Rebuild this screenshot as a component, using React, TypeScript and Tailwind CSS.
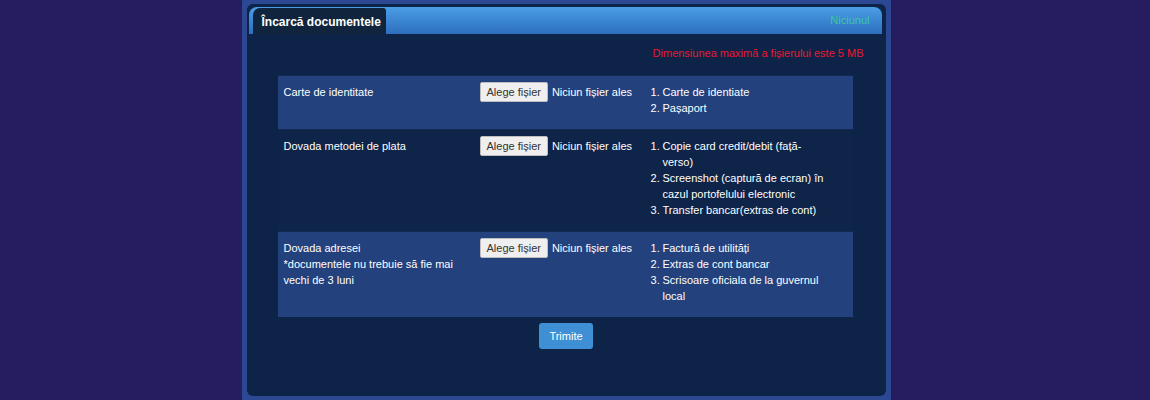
import React from "react";

const rows = [
  {
    label: ["Carte de identitate"],
    items: ["Carte de identiate", "Pașaport"],
    bg: "bg-[#23417c]",
  },
  {
    label: ["Dovada metodei de plata"],
    items: [
      "Copie card credit/debit (față-verso)",
      "Screenshot (captură de ecran) în cazul portofelului electronic",
      "Transfer bancar(extras de cont)",
    ],
    bg: "bg-[#0e2448]",
  },
  {
    label: ["Dovada adresei", "*documentele nu trebuie să fie mai vechi de 3 luni"],
    items: ["Factură de utilități", "Extras de cont bancar", "Scrisoare oficiala de la guvernul local"],
    bg: "bg-[#23417c]",
  },
];

export default function App() {
  return (
    <div
      className="w-[1150px] h-[400px] bg-[#261d60] flex justify-center overflow-hidden"
      style={{ fontFamily: '"Liberation Sans", Arial, sans-serif' }}
    >
      <div className="ml-[-18px] w-[649px] h-[400px] bg-[#2c4892] px-[5px] pt-[4px] pb-[4px] flex">
        <div className="flex-1 bg-[#0d2347] rounded-[6px] flex flex-col pt-[3px] px-[2px]">
          <div className="h-[27px] mr-[2px] rounded-t-[8px] bg-gradient-to-b from-[#4b9de6] to-[#2d6fbe] flex items-end pl-[4px] pr-[12px]">
            <div className="h-[26px] w-[133px] bg-[#10253d] rounded-tl-[7px] rounded-tr-[3px] flex items-center pl-[9px] pt-[1px] text-white text-[12px] font-bold whitespace-nowrap">
              Încarcă documentele
            </div>
            <div className="ml-auto self-center text-[11px] text-[#3cc79b] whitespace-nowrap">Niciunul</div>
          </div>
          <div className="flex justify-end pr-[20px] mt-[12px] text-[11px] leading-[14px] text-[#ee1730] whitespace-nowrap">
            Dimensiunea maximă a fișierului este 5 MB
          </div>
          <div className="mx-[29px] mt-[15px] w-[575px] flex flex-col">
            {rows.map((r, i) => (
              <div
                key={i}
                className={`${r.bg} grid grid-cols-[196px_171px_1fr] pt-[8px] pb-[13px] border-t border-[#112a52] text-[11px] leading-[16px] text-white`}
              >
                <div className="px-[6px]">
                  {r.label.map((l, j) => (
                    <div key={j}>{l}</div>
                  ))}
                </div>
                <div className="px-[6px] flex items-start whitespace-nowrap">
                  <span className="h-[20px] -mt-[2px] px-[6px] bg-[#efefef] border border-[#bdbdbd] text-[#333] text-[11px] leading-[18px] rounded-[2px]">
                    Alege fișier
                  </span>
                  <span className="ml-[4px]">Niciun fișier ales</span>
                </div>
                <ol className="pl-[6px] pr-[10px]">
                  {r.items.map((it, k) => (
                    <li key={k} className="flex">
                      <span className="w-[12px] shrink-0">{k + 1}.</span>
                      <span className="w-[166px]">{it}</span>
                    </li>
                  ))}
                </ol>
              </div>
            ))}
          </div>
          <div className="flex justify-center mt-[6px]">
            <button className="w-[54px] h-[26px] rounded-[3px] bg-[#3f8fd5] text-white text-[11px]">Trimite</button>
          </div>
        </div>
      </div>
    </div>
  );
}
